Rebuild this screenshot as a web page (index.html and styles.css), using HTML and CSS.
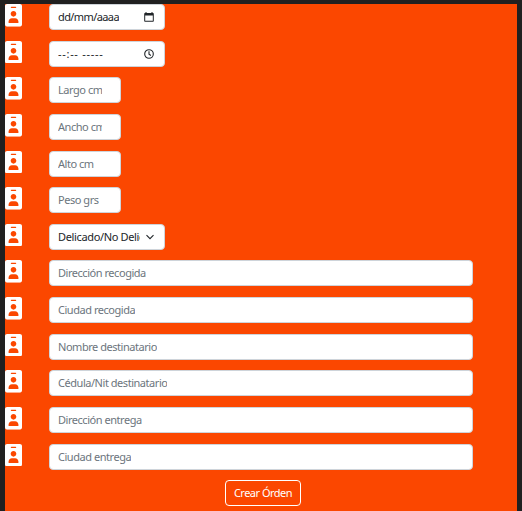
FILE: index.html
```html
<!DOCTYPE html>
<html lang="es">
<head>
<meta charset="utf-8">
<title>Crear Órden</title>
<link rel="stylesheet" href="styles.css">
</head>
<body>
<svg width="0" height="0" class="defs">
  <symbol id="badge" viewBox="0 0 384 512"><path fill-rule="evenodd" d="M336 0H48C21.500 0 0 21.500 0 48v416c0 26.500 21.500 48 48 48h288c26.500 0 48-21.500 48-48V48c0-26.500-21.500-48-48-48zM144 62h96c8.800 0 14 6 14 14s-6 14-14 14h-96c-8.800 0-14-6-14-14s6-14 14-14zm48 96c35.300 0 64 28.700 64 64s-28.700 64-64 64-64-28.700-64-64 28.700-64 64-64zm112 258c0 8-5 14-14 14H94c-9 0-14-6-14-14v-16c0-44 34-80 76-80h72c42 0 76 36 76 80v16z"/></symbol>
</svg>
<form class="panel">
  <div class="row"><svg class="badge"><use href="#badge"/></svg>
    <div class="control medium dark"><span class="text date">dd/mm/aaaa</span>
      <svg class="icon" viewBox="0 0 10 10"><path fill-rule="evenodd" d="M1.500 0h1v1h5V0h1v1h.5q.8 0 .8.8v7.200q0 .8-.8.8H1q-.8 0-.8-.8V1.800Q.200 1 1 1h.5zM1.200 3.500v5.300h7.600V3.500z"/></svg></div></div>
  <div class="row"><svg class="badge"><use href="#badge"/></svg>
    <div class="control medium dark"><span class="text time">--:-- -----</span>
      <svg class="icon line" viewBox="0 0 10 10"><circle cx="5" cy="5" r="4.300"/><path d="M5 2.200v3l1.900 1.300"/></svg></div></div>
  <div class="row"><svg class="badge"><use href="#badge"/></svg><div class="control small"><span class="text">Largo cm</span></div></div>
  <div class="row"><svg class="badge"><use href="#badge"/></svg><div class="control small"><span class="text">Ancho cm</span></div></div>
  <div class="row"><svg class="badge"><use href="#badge"/></svg><div class="control small"><span class="text">Alto cm</span></div></div>
  <div class="row"><svg class="badge"><use href="#badge"/></svg><div class="control small"><span class="text">Peso grs</span></div></div>
  <div class="row"><svg class="badge"><use href="#badge"/></svg>
    <div class="control medium dark"><span class="text choice">Delicado/No Delicado</span>
      <svg class="icon line chevron" viewBox="0 0 10 10"><path d="M1.500 3.200 5 6.700l3.500-3.500"/></svg></div></div>
  <div class="row"><svg class="badge"><use href="#badge"/></svg><div class="control"><span class="text">Dirección recogida</span></div></div>
  <div class="row"><svg class="badge"><use href="#badge"/></svg><div class="control"><span class="text">Ciudad recogida</span></div></div>
  <div class="row"><svg class="badge"><use href="#badge"/></svg><div class="control"><span class="text">Nombre destinatario</span></div></div>
  <div class="row"><svg class="badge"><use href="#badge"/></svg><div class="control"><span class="text">Cédula/Nit destinatario</span></div></div>
  <div class="row"><svg class="badge"><use href="#badge"/></svg><div class="control"><span class="text">Dirección entrega</span></div></div>
  <div class="row"><svg class="badge"><use href="#badge"/></svg><div class="control"><span class="text">Ciudad entrega</span></div></div>
  <button class="submit" type="button">Crear Órden</button>
</form>
</body>
</html>
```
FILE: styles.css
```css
* { box-sizing: border-box; }
body {
  margin: 0;
  height: 511px;
  padding: 4px 5px 0;
  overflow: hidden;
  background: #202020;
  font: 11px/16px "Noto Sans", "Open Sans", sans-serif;
  letter-spacing: -0.460px;
}
.defs { display: none; }
.panel {
  height: 507px;
  background: #fb4700;
  display: flex;
  flex-direction: column;
}
.row {
  flex: none;
  height: 36.640px;
  display: flex;
  align-items: flex-start;
  gap: 27px;
}
.badge { width: 17px; height: 22.670px; fill: #fff; }
.control {
  width: 424px;
  height: 26px;
  padding: 0 8px;
  display: flex;
  align-items: center;
  justify-content: space-between;
  background: #fff;
  border: 1px solid #ced4da;
  border-radius: 4px;
  color: #6c757d;
}
.medium { width: 116px; }
.small { width: 72px; padding-right: 18px; }
.dark { color: #212529; }
.text { overflow: hidden; white-space: nowrap; }
.date { letter-spacing: -0.600px; }
.time { letter-spacing: 0.700px; }
.choice { width: 82px; letter-spacing: -0.350px; }
.icon { width: 10px; height: 10px; margin-right: 2px; flex: none; fill: #212529; }
.line { fill: none; stroke: #212529; stroke-width: 1.100; }
.chevron { margin-right: 1px; }
.submit {
  align-self: center;
  width: 76px;
  height: 26px;
  padding: 0;
  margin-left: 4px;
  background: transparent;
  border: 1px solid #fff;
  border-radius: 4px;
  color: #fff;
  font: inherit;
  letter-spacing: -0.500px;
}
```
